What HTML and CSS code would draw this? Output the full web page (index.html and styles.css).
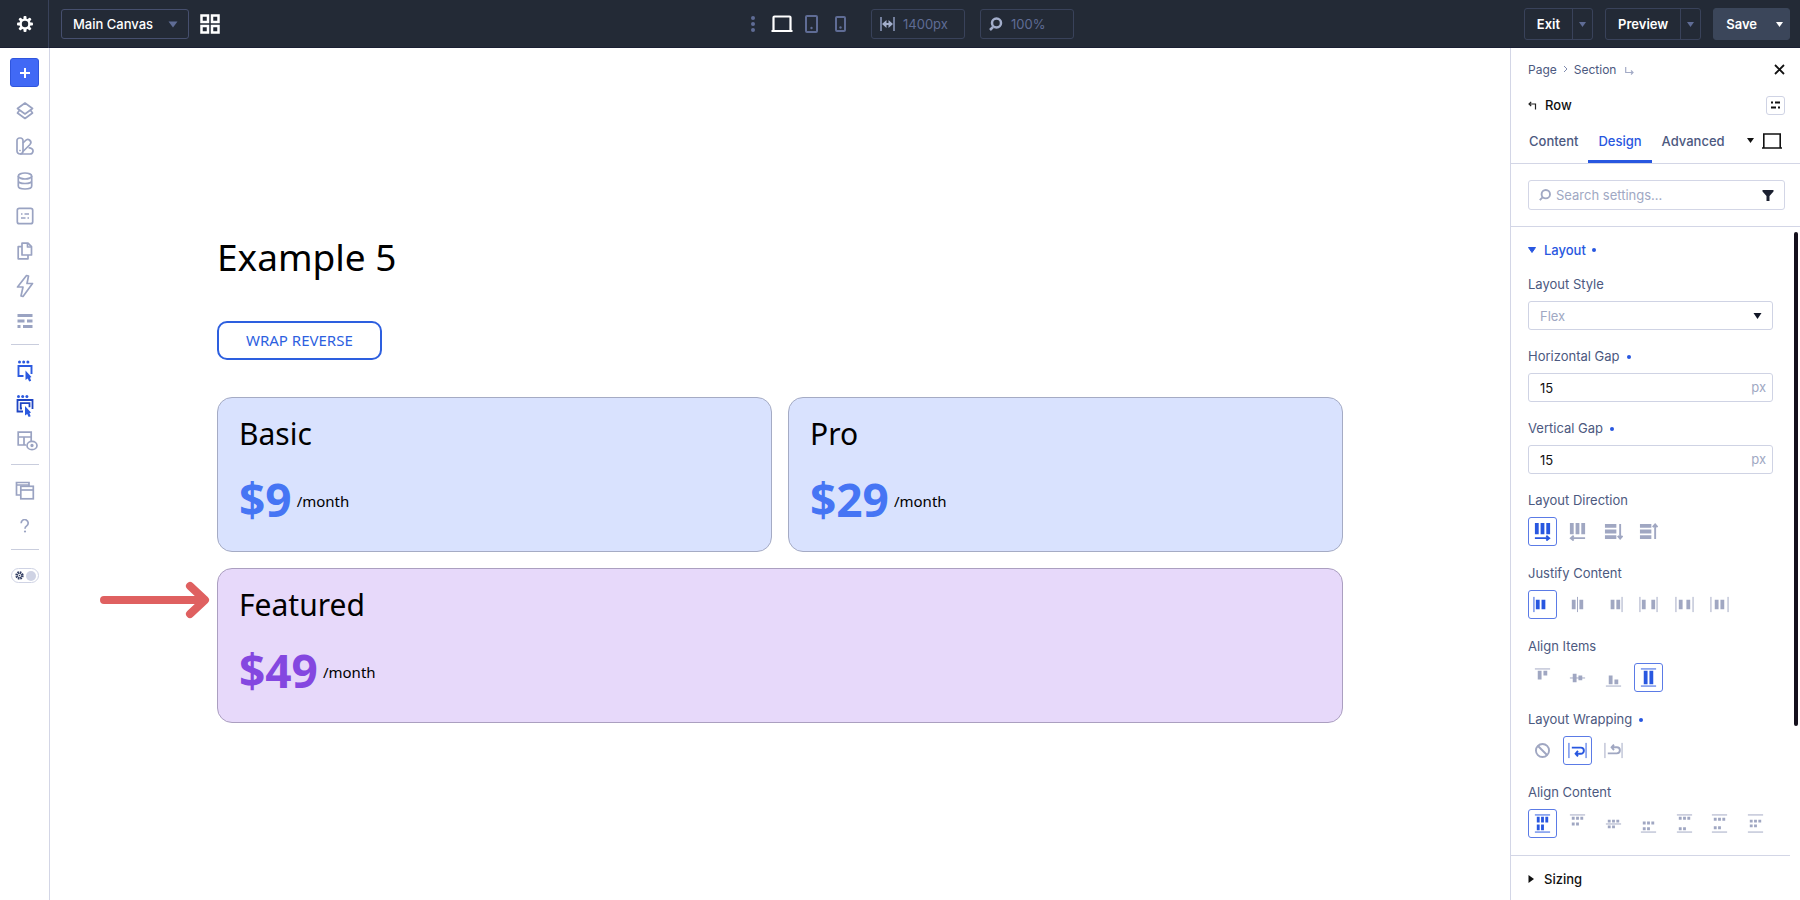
FILE: index.html
```html
<!DOCTYPE html>
<html lang="en">
<head>
<meta charset="utf-8">
<title>Main Canvas – Visual Builder</title>
<link rel="stylesheet" href="styles.css">
</head>
<body>
<div class="app">
  <header class="topbar">
    <div class="topbar-left">
      <button class="gear-cell" aria-label="Settings">
        <svg width="18" height="18" viewBox="0 0 18 18"><g fill="#fff"><rect x="7.500" y="1" width="3" height="16" rx="1"/><rect x="7.500" y="1" width="3" height="16" rx="1" transform="rotate(45 9 9)"/><rect x="7.500" y="1" width="3" height="16" rx="1" transform="rotate(90 9 9)"/><rect x="7.500" y="1" width="3" height="16" rx="1" transform="rotate(135 9 9)"/><circle cx="9" cy="9" r="5.600"/></g><circle cx="9" cy="9" r="3.200" fill="#232a36"/></svg>
      </button>
      <div class="canvas-select">
        <select aria-label="Canvas"><option>Main Canvas</option></select>
        <svg class="caret" width="10" height="7" viewBox="0 0 10 7"><path d="M0.500 0.500h9L5 6.500z" fill="#5f6c95"/></svg>
      </div>
      <button class="bare" aria-label="Wireframe grid">
        <svg width="20" height="20" viewBox="0 0 20 20" fill="none" stroke="#fff" stroke-width="2.500"><rect x="1.500" y="1.500" width="6.500" height="6.500"/><rect x="12" y="1.500" width="6.500" height="6.500"/><rect x="1.500" y="12" width="6.500" height="6.500"/><rect x="12" y="12" width="6.500" height="6.500"/></svg>
      </button>
    </div>
    <div class="topbar-center">
      <button class="bare dots" aria-label="More">
        <svg width="4" height="16" viewBox="0 0 4 16" fill="#5f6c95"><circle cx="2" cy="2" r="2"/><circle cx="2" cy="8" r="2"/><circle cx="2" cy="14" r="2"/></svg>
      </button>
      <button class="bare desktop" aria-label="Desktop">
        <svg width="22" height="18" viewBox="0 0 22 18"><path d="M2.500 16V2.500a1 1 0 0 1 1-1h15a1 1 0 0 1 1 1V16M0.500 16h21" fill="none" stroke="#fff" stroke-width="2.200"/></svg>
      </button>
      <button class="bare tablet" aria-label="Tablet">
        <svg width="13" height="18" viewBox="0 0 13 18"><rect x="1" y="1" width="11" height="16" rx="1" fill="none" stroke="#5f6c95" stroke-width="2"/><circle cx="6.500" cy="13" r="1.200" fill="#5f6c95"/></svg>
      </button>
      <button class="bare phone" aria-label="Phone">
        <svg width="11" height="16" viewBox="0 0 11 16"><rect x="1" y="1" width="9" height="14" rx="1" fill="none" stroke="#5f6c95" stroke-width="2"/><circle cx="5.500" cy="11.500" r="1.200" fill="#5f6c95"/></svg>
      </button>
      <label class="dim-box">
        <svg width="15" height="14" viewBox="0 0 15 14"><path d="M1 0v14M14 0v14" stroke="#8f9bbd" stroke-width="1.500"/><path d="M2 7l4.500-4v3h2V3L13 7l-4.500 4V8h-2v3z" fill="#a3aecb"/></svg>
        <input type="text" value="1400px" aria-label="Canvas width">
      </label>
      <label class="dim-box">
        <svg width="14" height="14" viewBox="0 0 14 14" fill="none" stroke="#a3aecb"><circle cx="7.500" cy="6" r="4.500" stroke-width="2.500"/><path d="M4 10l-3 3" stroke-width="2.500"/></svg>
        <input type="text" value="100%" aria-label="Zoom">
      </label>
    </div>
    <div class="topbar-right">
      <div class="split">
        <button class="split-main">Exit</button>
        <button class="split-caret" aria-label="Exit options"><svg width="7" height="5" viewBox="0 0 7 5"><path d="M0 0h7L3.500 5z" fill="#5f6c95"/></svg></button>
      </div>
      <div class="split">
        <button class="split-main">Preview</button>
        <button class="split-caret" aria-label="Preview options"><svg width="7" height="5" viewBox="0 0 7 5"><path d="M0 0h7L3.500 5z" fill="#5f6c95"/></svg></button>
      </div>
      <div class="split save">
        <button class="split-main">Save</button>
        <button class="split-caret" aria-label="Save options"><svg width="7" height="5" viewBox="0 0 7 5"><path d="M0 0h7L3.500 5z" fill="#fff"/></svg></button>
      </div>
    </div>
  </header>

  <div class="body">
    <nav class="sidebar">
      <button class="add" aria-label="Add"><svg width="12" height="12" viewBox="0 0 12 12"><path d="M6 1v10M1 6h10" stroke="#fff" stroke-width="2"/></svg></button>
      <div class="tools">
        <button aria-label="Layers"><svg width="18" height="18" viewBox="0 0 18 18" fill="none" stroke="#9aa3c2" stroke-width="1.700" stroke-linejoin="round"><path d="M9 1l7.500 5.500L9 12 1.500 6.500z"/><path d="M3.500 8.200L1.500 11 9 16.500l7.500-5.500-2-2.800"/></svg></button>
        <button aria-label="Design system"><svg width="18" height="18" viewBox="0 0 18 18" fill="none" stroke="#9aa3c2" stroke-width="1.700" stroke-linejoin="round"><path d="M3.500 1h1A2.500 2.500 0 0 1 7 3.500V14a3 3 0 0 1-6 0V3.500A2.500 2.500 0 0 1 3.500 1z"/><path d="M7 6l2.500-2.500a3 3 0 0 1 4.500 4L7 14.500"/><path d="M4 17h10a3 3 0 0 0 1.500-5.600c-1-.6-1.500-.7-3-.4"/><circle cx="4" cy="13.500" r=".5" stroke-width="1"/></svg></button>
        <button aria-label="Data"><svg width="16" height="18" viewBox="0 0 16 18" fill="none" stroke="#9aa3c2" stroke-width="1.700"><ellipse cx="8" cy="4" rx="6.700" ry="3"/><path d="M1.300 4v10c0 1.700 3 3 6.700 3s6.700-1.300 6.700-3V4M1.300 9c0 1.300 3 2.500 6.700 2.500s6.700-1.200 6.700-2.500"/></svg></button>
        <button aria-label="Attributes"><svg width="18" height="18" viewBox="0 0 18 18" fill="none" stroke="#9aa3c2" stroke-width="1.700"><rect x="1.300" y="1.300" width="15.400" height="15.400" rx="2"/><path d="M5 7h1.500M8.500 7H13M5 11h4.500M11.500 11H13"/></svg></button>
        <button aria-label="Pages"><svg width="16" height="18" viewBox="0 0 16 18" fill="none" stroke="#9aa3c2" stroke-width="1.700" stroke-linejoin="round"><path d="M5 1.200h6l3.500 3.500V13H5z"/><path d="M10.500 1.500V5H14M5 4.700H1.200V16.800H11V13"/></svg></button>
        <button aria-label="Performance"><svg width="18" height="24" viewBox="0 0 18 24" fill="none" stroke="#9aa3c2" stroke-width="1.700" stroke-linejoin="round"><path d="M10.500 1.500L1.500 13h5.500l-2 9 2 .5L16.500 9.500H11l1.500-7.500z"/></svg></button>
        <button aria-label="Structure"><svg width="16" height="14" viewBox="0 0 16 14" fill="#9aa3c2"><rect x=".5" y="0" width="15" height="3"/><rect x=".5" y="5.500" width="7" height="3"/><rect x="10" y="5.500" width="5.500" height="3"/><rect x=".5" y="11" width="3" height="3"/><rect x="6" y="11" width="9.500" height="3"/></svg></button>
      </div>
      <hr>
      <div class="tools second">
        <button aria-label="Select element"><svg width="18" height="22" viewBox="0 0 18 22"><g fill="#2c5ae0"><circle cx="3.500" cy="2" r="1.500"/><circle cx="7.700" cy="2" r="1.500"/><circle cx="11.900" cy="2" r="1.500"/></g><path d="M7.500 16H2.500V6h13v8" fill="none" stroke="#2c5ae0" stroke-width="1.900"/><path d="M9.500 10.500l6 6.500-1.500.7 1.200 3-2 .8-1.500-3-2.200 1.500z" fill="#2c5ae0"/></svg></button>
        <button aria-label="Select group"><svg width="18" height="22" viewBox="0 0 18 22"><g fill="#2c5ae0"><circle cx="2.500" cy="1.500" r="1.500"/><circle cx="6.700" cy="1.500" r="1.500"/><circle cx="10.900" cy="1.500" r="1.500"/></g><path d="M7 16.500H1.500V5h15v9M6 13.500H4.700V8.200h8.800v4" fill="none" stroke="#1f45c4" stroke-width="1.800"/><path d="M9 11l6 6.500-1.500.7 1.200 3-2 .8-1.500-3-2.200 1.500z" fill="#2c5ae0"/></svg></button>
        <button class="wide" aria-label="Show modules"><svg width="22" height="20" viewBox="0 0 22 20" fill="none" stroke="#9aa3c2" stroke-width="1.700"><path d="M10 14H2.200V1.200h13V10M2.200 6h13M8 6v8"/><ellipse cx="16" cy="14.500" rx="5" ry="4.200"/><circle cx="16" cy="14.500" r=".8" fill="#9aa3c2"/></svg></button>
      </div>
      <hr>
      <div class="tools second">
        <button aria-label="Windows"><svg width="20" height="20" viewBox="0 0 20 20" fill="none" stroke="#9aa3c2" stroke-width="1.700"><path d="M5.500 14H1.500V1.500H14V5M1.500 4H14"/><rect x="5.800" y="5.300" width="12.500" height="12.500"/><path d="M5.800 9h12.500"/></svg></button>
        <button aria-label="Help"><svg width="10" height="14" viewBox="0 0 10 14"><path d="M1.200 4.200a3.500 3.500 0 1 1 5.500 2.700C5.500 7.700 5 8.300 5 9.800" fill="none" stroke="#9aa3c2" stroke-width="1.700"/><circle cx="5" cy="12.500" r="1.100" fill="#9aa3c2"/></svg></button>
      </div>
      <hr>
      <button class="theme" role="switch" aria-checked="false" aria-label="Dark mode">
        <svg width="9" height="9" viewBox="0 0 9 9"><circle cx="4.500" cy="4.500" r="3.200" fill="none" stroke="#343f63" stroke-width="2" stroke-dasharray="1.600 .9"/><circle cx="4.500" cy="4.500" r="2.200" fill="none" stroke="#343f63"/><circle cx="4.500" cy="4.500" r=".8" fill="#343f63"/></svg>
        <span class="knob"></span>
      </button>
    </nav>

    <main class="canvas">
      <h1>Example 5</h1>
      <a class="cta" href="#">WRAP REVERSE</a>
      <div class="cards">
        <section class="card"><h2>Basic</h2><p class="price"><strong>$9</strong> <span>/month</span></p></section>
        <section class="card"><h2>Pro</h2><p class="price"><strong>$29</strong> <span>/month</span></p></section>
        <section class="card featured">
          <svg class="arrow" width="112" height="40" viewBox="0 0 112 40"><path d="M5 20H104M91 6l15 14-15 14" fill="none" stroke="#df6060" stroke-width="8" stroke-linecap="round" stroke-linejoin="round"/></svg>
          <h2>Featured</h2><p class="price"><strong>$49</strong> <span>/month</span></p>
        </section>
      </div>
    </main>

    <aside class="panel">
      <div class="panel-head">
        <div class="crumbs">
          <a href="#">Page</a>
          <svg width="5" height="8" viewBox="0 0 5 8"><path d="M1 1l3 3-3 3" fill="none" stroke="#7f8aad"/></svg>
          <a href="#">Section</a>
          <svg class="sub" width="9" height="9" viewBox="0 0 9 9"><path d="M.7 0v5.500H8M6 3.500l2 2-2 2" fill="none" stroke="#a3abc6" stroke-width="1.200"/></svg>
          <button class="bare close" aria-label="Close"><svg width="11" height="11" viewBox="0 0 11 11"><path d="M1 1l9 9M10 1l-9 9" stroke="#111" stroke-width="1.800"/></svg></button>
        </div>
        <div class="title-row">
          <svg width="9" height="9" viewBox="0 0 9 9"><path d="M7.500 8.500V3H1M3.200 .8L1 3l2.200 2.200" fill="none" stroke="#222" stroke-width="1.200"/></svg>
          <strong>Row</strong>
          <button class="preset" aria-label="Presets"><svg width="9" height="8" viewBox="0 0 9 8"><path d="M0 1.500h2M4 1.500h5M0 6.500h5M7 6.500h2" stroke="#111" stroke-width="1.800"/></svg></button>
        </div>
        <div class="tabs">
          <button>Content</button>
          <button class="active">Design</button>
          <button>Advanced</button>
          <button class="bare device" aria-label="Device">
            <svg width="7" height="5" viewBox="0 0 7 5"><path d="M0 0h7L3.500 5z" fill="#111"/></svg>
            <svg width="20" height="16" viewBox="0 0 20 16"><path d="M1.800 15V1h16.400v14M0 15h20" fill="none" stroke="#111" stroke-width="1.600"/></svg>
          </button>
        </div>
      </div>
      <div class="search-wrap">
        <label class="search">
          <svg width="12" height="12" viewBox="0 0 12 12" fill="none" stroke="#a0a8c3" stroke-width="1.900"><circle cx="6.800" cy="5.200" r="4.200"/><path d="M3.800 8.200L.8 11.200"/></svg>
          <input type="text" placeholder="Search settings..." aria-label="Search settings">
          <svg width="12" height="11" viewBox="0 0 12 11"><path d="M.5 0h11v1.500L7.500 6v5h-3V6L.5 1.500z" fill="#1b2030"/></svg>
        </label>
      </div>
      <div class="settings">
        <section class="group">
          <h3 class="open"><svg width="8" height="6" viewBox="0 0 8 6"><path d="M.5 .5h7L4 5.500z" fill="#2857e0" stroke="#2857e0"/></svg>Layout<i class="dot"></i></h3>
          <div class="field">
            <label for="layout-style">Layout Style</label>
            <div class="control"><select id="layout-style"><option>Flex</option></select><svg class="caret" width="9" height="6" viewBox="0 0 9 6"><path d="M.5 0h8L4.500 6z" fill="#111626"/></svg></div>
          </div>
          <div class="field">
            <label for="h-gap">Horizontal Gap<i class="dot"></i></label>
            <div class="control"><input id="h-gap" type="text" value="15"><span class="unit">px</span></div>
          </div>
          <div class="field">
            <label for="v-gap">Vertical Gap<i class="dot"></i></label>
            <div class="control"><input id="v-gap" type="text" value="15"><span class="unit">px</span></div>
          </div>
          <div class="field" role="group" aria-label="Layout Direction">
            <span class="label">Layout Direction</span>
            <div class="options">
              <button class="on" aria-label="Row"><svg class="ic" viewBox="0 0 20 20"><path d="M2 1h4v12H2zM8 1h4v12H8zM14 1h4v12h-4z"/><path class="l2" d="M2 17h15M14 14.500l3 2.500-3 2.500"/></svg></button>
              <button aria-label="Row reverse"><svg class="ic" viewBox="0 0 20 20"><path d="M2 1h4v12H2zM8 1h4v12H8zM14 1h4v12h-4z"/><path class="l2" d="M18 17H3M6 14.500L3 17l3 2.500"/></svg></button>
              <button aria-label="Column"><svg class="ic" viewBox="0 0 20 20"><path d="M1 2h12v4H1zM1 8h12v4H1zM1 14h12v4H1z"/><path class="l2" d="M17 2v15M14.500 14.500l2.500 3 2.500-3"/></svg></button>
              <button aria-label="Column reverse"><svg class="ic" viewBox="0 0 20 20"><path d="M1 2h12v4H1zM1 8h12v4H1zM1 14h12v4H1z"/><path class="l2" d="M17 18V3M14.500 5.500l2.500-3 2.500 3"/></svg></button>
            </div>
          </div>
          <div class="field" role="group" aria-label="Justify Content">
            <span class="label">Justify Content</span>
            <div class="options">
              <button class="on" aria-label="Start"><svg class="ic" viewBox="0 0 20 20"><path d="M3 5h4v10H3zM9 5h4v10H9z"/><path class="l1" d="M1 2v16"/></svg></button>
              <button aria-label="Center"><svg class="ic" viewBox="0 0 20 20"><path d="M4 5h4v10H4zM12 5h4v10h-4z"/><path class="l1" d="M10 2v16"/></svg></button>
              <button aria-label="End"><svg class="ic" viewBox="0 0 20 20"><path d="M7 5h4v10H7zM13 5h4v10h-4z"/><path class="l1" d="M19 2v16"/></svg></button>
              <button aria-label="Space between"><svg class="ic" viewBox="0 0 20 20"><path d="M3 5h4v10H3zM13 5h4v10h-4z"/><path class="l1" d="M1 2v16M19 2v16"/></svg></button>
              <button aria-label="Space around"><svg class="ic" viewBox="0 0 20 20"><path d="M4 5h4v10H4zM12 5h4v10h-4z"/><path class="l1" d="M1 2v16M19 2v16"/></svg></button>
              <button aria-label="Space evenly"><svg class="ic" viewBox="0 0 20 20"><path d="M5 5h4v10H5zM11 5h4v10h-4z"/><path class="l1" d="M1 2v16M19 2v16"/></svg></button>
            </div>
          </div>
          <div class="field" role="group" aria-label="Align Items">
            <span class="label">Align Items</span>
            <div class="options">
              <button aria-label="Top"><svg class="ic" viewBox="0 0 20 20"><path d="M5 3h4v9H5zM11 3h4v5h-4z"/><path class="l1" d="M2 1h16"/></svg></button>
              <button aria-label="Middle"><svg class="ic" viewBox="0 0 20 20"><path d="M5 6h4v9H5zM11 8h4v5h-4z"/><path class="l1" d="M2 10.500h16"/></svg></button>
              <button aria-label="Bottom"><svg class="ic" viewBox="0 0 20 20"><path d="M5 8h4v9H5zM11 12h4v5h-4z"/><path class="l1" d="M2 19h16"/></svg></button>
              <button class="on" aria-label="Stretch"><svg class="ic" viewBox="0 0 20 20"><path d="M5 3h4v14H5zM11 3h4v14h-4z"/><path class="l1" d="M2 1h16M2 19h16"/></svg></button>
            </div>
          </div>
          <div class="field" role="group" aria-label="Layout Wrapping">
            <span class="label">Layout Wrapping<i class="dot"></i></span>
            <div class="options">
              <button aria-label="No wrap"><svg class="ic" viewBox="0 0 20 20"><path class="l2" d="M5 5l10 10"/><circle class="l2" cx="10" cy="10" r="6.900"/></svg></button>
              <button class="on" aria-label="Wrap"><svg class="ic" viewBox="0 0 20 20"><path class="l1" d="M1 2v16M19 2v16"/><path class="l2" d="M4 7h9.500a3.200 3.200 0 0 1 0 6.400H8M10.500 10.500L8 13.400l2.500 2.900"/></svg></button>
              <button aria-label="Wrap reverse"><svg class="ic" viewBox="0 0 20 20"><path class="l1" d="M1 2v16M19 2v16"/><path class="l2" d="M4 13h9.500a3.200 3.200 0 0 0 0-6.400H8M10.500 9.500L8 6.600l2.500-2.900"/></svg></button>
            </div>
          </div>
          <div class="field" role="group" aria-label="Align Content">
            <span class="label">Align Content</span>
            <div class="options">
              <button class="on" aria-label="Stretch"><svg class="ic" viewBox="0 0 20 20"><path d="M4 3h3v6H4zM8.500 3h3v6h-3zM13 3h3v6h-3zM4 11h3v6H4zM8.500 11h3v6h-3z"/><path class="l1" d="M2 1h16M2 19h16"/></svg></button>
              <button aria-label="Start"><svg class="ic" viewBox="0 0 20 20"><path d="M4 3h3v3H4zM8.500 3h3v3h-3zM13 3h3v3h-3zM4 9h3v3H4zM8.500 9h3v3h-3z"/><path class="l1" d="M2 1h16"/></svg></button>
              <button aria-label="Center"><svg class="ic" viewBox="0 0 20 20"><path d="M4 6h3v3H4zM8.500 6h3v3h-3zM13 6h3v3h-3zM4 12h3v3H4zM8.500 12h3v3h-3z"/><path class="l1" d="M2 10.500h16"/></svg></button>
              <button aria-label="End"><svg class="ic" viewBox="0 0 20 20"><path d="M4 8h3v3H4zM8.500 8h3v3h-3zM13 8h3v3h-3zM4 14h3v3H4zM8.500 14h3v3h-3z"/><path class="l1" d="M2 19h16"/></svg></button>
              <button aria-label="Space between"><svg class="ic" viewBox="0 0 20 20"><path d="M4 3h3v3H4zM8.500 3h3v3h-3zM13 3h3v3h-3zM4 14h3v3H4zM8.500 14h3v3h-3z"/><path class="l1" d="M2 1h16M2 19h16"/></svg></button>
              <button aria-label="Space around"><svg class="ic" viewBox="0 0 20 20"><path d="M4 4h3v3H4zM8.500 4h3v3h-3zM13 4h3v3h-3zM4 13h3v3H4zM8.500 13h3v3h-3z"/><path class="l1" d="M2 1h16M2 19h16"/></svg></button>
              <button aria-label="Space evenly"><svg class="ic" viewBox="0 0 20 20"><path d="M4 6h3v3H4zM8.500 6h3v3h-3zM13 6h3v3h-3zM4 11h3v3H4zM8.500 11h3v3h-3z"/><path class="l1" d="M2 1h16M2 19h16"/></svg></button>
            </div>
          </div>
        </section>
        <section class="group">
          <h3><svg width="8" height="8" viewBox="0 0 8 8"><path d="M.5 0v8L6 4z" fill="#111"/></svg>Sizing</h3>
        </section>
        <div class="thumb"></div>
      </div>
    </aside>
  </div>
</div>
</body>
</html>
```
FILE: styles.css
```css
* { box-sizing: border-box; }
body { margin: 0; font-family: Inter, "Liberation Sans", sans-serif; background: #fff; color: #111; }
button, input, select { font: inherit; color: inherit; margin: 0; }
button { background: none; border: 0; padding: 0; cursor: pointer; display: flex; align-items: center; justify-content: center; }
input, select { background: none; border: 0; outline: 0; padding: 0; min-width: 0; appearance: none; }
a { text-decoration: none; color: inherit; }
svg { display: block; flex: none; }

.app { height: 100vh; display: flex; flex-direction: column; overflow: hidden; }

.topbar { display: grid; grid-template-columns: 1fr auto 1fr; align-items: center; height: 48px; padding-bottom: 1px; flex: none; background: #232a36; border-bottom: 1px solid #1a1f33; font-size: 13px; font-weight: 500; color: #fff; }
.topbar-left, .topbar-center, .topbar-right { display: flex; align-items: center; }
.gear-cell { width: 49px; height: 48px; padding-left: 2px; border-right: 1px solid #39425a; margin-right: 12px; }
.canvas-select { display: flex; position: relative; margin-right: 11px; }
.canvas-select select { width: 128px; height: 30px; padding-left: 11px; border: 1px solid #464f6e; border-radius: 3px; }
.canvas-select .caret { position: absolute; right: 11px; top: 12px; pointer-events: none; }
.topbar-center { padding-left: 25px; }
.dots { margin-right: 16px; }
.desktop { margin-right: 12px; }
.tablet { margin-right: 17px; }
.phone { margin-right: 25px; }
.dim-box { display: flex; align-items: center; gap: 8px; width: 94px; height: 30px; padding: 0 8px; border: 1px solid #39425a; border-radius: 3px; color: #5f6c95; }
.dim-box + .dim-box { margin-left: 15px; }
.dim-box input { width: 100%; font-weight: 400; }
.topbar-right { justify-content: flex-end; gap: 12px; padding-right: 10px; }
.split { display: flex; height: 32px; border: 1px solid #39425a; border-radius: 3px; }
.split-main { padding: 0 12px; font-weight: 600; }
.split-caret { width: 20px; border-left: 1px solid #39425a; }
.save { background: #3b465a; border-color: #3b465a; }
.save .split-caret { border-left: 0; }

.body { flex: 1; display: flex; min-height: 0; }

.sidebar { width: 50px; flex: none; border-right: 1px solid #d3d6e6; padding-top: 10px; display: flex; flex-direction: column; align-items: center; }
.add { width: 29px; height: 29px; background: #4169f5; border: 1px solid #2f55dd; border-radius: 3px; }
.tools { padding-top: 6px; }
.tools.second { padding-top: 0; }
.tools button { width: 36px; height: 35px; }
.tools .wide { padding-left: 5px; }
.sidebar hr { width: 28px; border: 0; border-top: 1px solid #c9cddd; margin: 6px 0 8px; flex: none; }
.theme { width: 28px; height: 15px; margin-top: 10px; padding: 0 2px 0 3px; border: 1px solid #cfd3e4; border-radius: 8px; justify-content: space-between; }
.knob { width: 10px; height: 10px; border-radius: 50%; background: #cfd3e4; }

.canvas { flex: 1; min-width: 0; padding: 184px 167px 0; font-family: "Noto Sans", "Open Sans", sans-serif; color: #000; }
.canvas h1 { margin: 0; font-size: 37px; line-height: 50px; font-weight: 400; }
.cta { display: inline-block; margin-top: 39px; padding: 0 27px; border: 2px solid #2d5fdf; border-radius: 10px; color: #2d5fdf; font-size: 15px; line-height: 35px; vertical-align: top; }
.cards { display: grid; grid-template-columns: 1fr 1fr; gap: 16px; margin-top: 37px; }
.card { position: relative; height: 155px; padding: 18px 21px; border: 1px solid #a5abc4; border-radius: 15px; background: #d9e2fe; }
.card h2 { margin: 0; font-size: 30px; line-height: 36px; font-weight: 400; }
.price { display: flex; align-items: center; gap: 5px; margin: 14px 0 0; font-size: 15px; line-height: 62px; }
.price strong { font-size: 46px; color: #4675f4; }
.price span { padding-top: 4px; }
.featured { grid-column: 1 / -1; background: #e7d9fa; border-color: #ab9fc0; }
.featured .price strong { color: #8447e0; }
.arrow { position: absolute; right: 100%; top: 11px; margin-right: 7px; }

.panel { width: 290px; flex: none; border-left: 1px solid #d3d6e6; display: flex; flex-direction: column; color: #4c5980; font-size: 13px; font-weight: 500; }
.panel-head { padding: 11px 15px 0 17px; border-bottom: 1px solid #d3d6e6; }
.crumbs { display: flex; align-items: center; height: 20px; font-size: 12px; font-weight: 400; }
.crumbs svg { margin: 0 6px; }
.crumbs .sub { margin: 4px 0 0 9px; }
.close { margin-left: auto; }
.crumbs .close svg { margin: 0; }
.title-row { display: flex; align-items: center; gap: 8px; height: 20px; margin-top: 16px; color: #111; }
.title-row strong { font-weight: 500; }
.preset { width: 19px; height: 19px; margin-left: auto; border: 1px solid #cfd3e4; border-radius: 3px; }
.tabs { display: flex; margin-top: 6px; height: 42px; }
.tabs button { padding: 0 10px; border-bottom: 3px solid transparent; }
.tabs button:first-child { padding-left: 1px; }
.tabs .active { color: #2857e0; border-bottom-color: #2857e0; }
.tabs .device { gap: 8px; margin-left: auto; padding: 0 3px 0 0; }
.search-wrap { padding: 16px 15px; border-bottom: 1px solid #d3d6e6; padding-left: 17px; }
.search { display: flex; align-items: center; gap: 5px; height: 30px; padding: 0 10px; border: 1px solid #d3d6e6; border-radius: 3px; }
.search input { flex: 1; font-weight: 400; }
.search input::placeholder { color: #a0a8c3; opacity: 1; }
.settings { flex: 1; position: relative; overflow: hidden; min-height: 0; }
.group { margin-right: 10px; padding: 13px 17px 16px; border-bottom: 1px solid #d3d6e6; }
.group h3 { display: flex; align-items: center; gap: 8px; margin: 0; height: 20px; font-size: 13px; font-weight: 500; color: #111; }
.group h3.open { color: #2857e0; }
.dot { display: inline-block; width: 4px; height: 4px; border-radius: 50%; background: #2857e0; margin-left: 7px; vertical-align: middle; }
h3 .dot { margin-left: -2px; }
.field { margin-top: 17px; font-weight: 400; }
h3 + .field { margin-top: 15px; }
.field label, .field .label { display: block; line-height: 18px; margin-bottom: 8px; }
.control { position: relative; display: flex; }
.control input, .control select { width: 100%; height: 29px; padding: 0 11px; border: 1px solid #cfd3e4; border-radius: 3px; color: #111; }
.control select { color: #a0a8c3; }
.control .caret { position: absolute; right: 11px; top: 12px; pointer-events: none; }
.unit { position: absolute; right: 7px; top: 6px; color: #a0a8c3; }
.options { display: grid; grid-template-columns: repeat(7, 1fr); gap: 3px; padding-bottom: 1px; }
.options button { width: 29px; height: 29px; border: 1px solid transparent; border-radius: 3px; color: #a0a7c2; }
.options .on { color: #2857e0; border-color: #5b7be6; }
.ic { width: 19px; height: 19px; fill: currentColor; }
.ic .l1 { fill: none; stroke: currentColor; stroke-width: 1; }
.ic .l2 { fill: none; stroke: currentColor; stroke-width: 2; }
.thumb { position: absolute; right: 2px; top: 5px; width: 4px; height: 494px; border-radius: 2px; background: #14101c; }
```
